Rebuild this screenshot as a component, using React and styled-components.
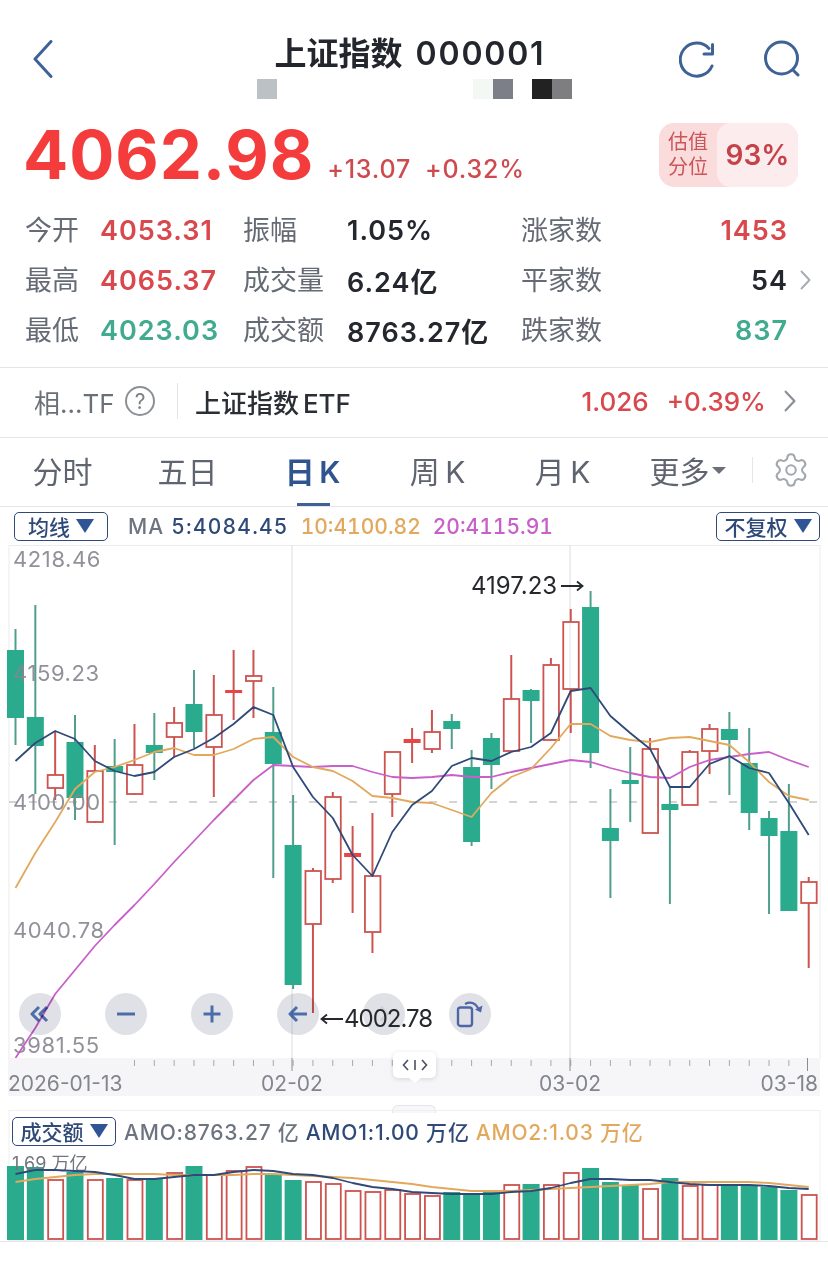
import React from 'react';
import styled, {createGlobalStyle} from 'styled-components';
import {Settings} from 'lucide-react';

const NAVY = '#2f4a78';
const BLUE = '#3f6296';
const RED = '#d9484d';
const GREEN = '#41ab90';
const BODY_GREEN = '#2bab8e';
const WICK_GREEN = '#4f9f8c';
const WICK_RED = '#cc5350';
const ORANGE = '#e2a95e';
const PINK = '#c95fc9';
const FONT = 'Inter, "Noto Sans CJK SC", sans-serif';

const GlobalStyle = createGlobalStyle`
  html, body {
    margin: 0;
    padding: 0;
    background: #fff;
    font-family: ${FONT};
    overflow: hidden;
  }
`;

// [high, body top, body bottom, low, kind]  g = green, r = hollow red, d = solid red doji
const candles = [
  [629, 650, 718, 745, 'g'], [605, 717, 746, 794, 'g'], [731, 775, 788, 800, 'r'], [715, 742, 798, 820, 'g'],
  [745, 771, 822, 823, 'r'], [739, 766, 772, 845, 'g'], [724, 765, 794, 795, 'r'], [713, 745, 753, 780, 'g'],
  [707, 723, 737, 757, 'r'], [670, 704, 732, 748, 'g'], [675, 715, 747, 797, 'r'], [650, 690, 693, 720, 'd'],
  [650, 676, 681, 718, 'r'], [687, 732, 764, 878, 'g'], [795, 845, 985, 989, 'g'], [868, 871, 924, 1013, 'r'],
  [792, 797, 879, 883, 'r'], [826, 853, 857, 913, 'd'], [813, 876, 932, 953, 'r'], [752, 752, 794, 817, 'r'],
  [728, 739, 743, 763, 'd'], [710, 732, 749, 753, 'r'], [714, 721, 729, 749, 'g'], [750, 767, 842, 846, 'g'],
  [733, 738, 765, 789, 'g'], [655, 699, 751, 751, 'r'], [689, 690, 701, 743, 'g'], [658, 665, 740, 740, 'r'],
  [609, 622, 689, 733, 'r'], [591, 607, 753, 768, 'g'], [789, 828, 841, 898, 'g'], [747, 780, 784, 822, 'g'],
  [738, 749, 833, 833, 'r'], [787, 804, 810, 904, 'g'], [750, 752, 805, 805, 'r'], [724, 729, 751, 774, 'r'],
  [712, 729, 740, 795, 'g'], [728, 763, 813, 830, 'g'], [811, 818, 836, 914, 'g'], [784, 831, 911, 911, 'g'],
  [877, 882, 903, 968, 'r'],
];

const slotX = i => 15.5 + i * 19.83;

const ma5 = [761, 743, 731, 739, 761, 771, 776, 772, 757, 749, 738, 724, 707, 715, 767, 797, 818, 855, 876, 832, 805,
  791, 766, 758, 761, 752, 747, 733, 691, 688, 716, 733, 749, 787, 787, 764, 756, 768, 773, 803, 835];
const ma10 = [888, 853, 822, 789, 772, 767, 760, 752, 748, 755, 755, 749, 739, 737, 757, 767, 771, 781, 796, 798, 802,
  803, 810, 817, 793, 777, 769, 748, 724, 724, 736, 740, 742, 738, 737, 741, 745, 762, 782, 796, 800];
const ma20 = [1058, 1028, 994, 970, 946, 925, 905, 884, 862, 841, 820, 800, 780, 765, 766, 767, 766, 766, 772, 777, 778,
  777, 775, 777, 777, 772, 768, 764, 760, 762, 768, 773, 777, 778, 767, 760, 757, 754, 752, 760, 767];

// [bar top, kind]
const volumes = [
  [1166, 'g'], [1167, 'g'], [1180, 'r'], [1172, 'g'], [1180, 'r'], [1178, 'g'], [1180, 'r'], [1178, 'g'], [1173, 'r'],
  [1166, 'g'], [1175, 'r'], [1171, 'r'], [1167, 'r'], [1175, 'g'], [1180, 'g'], [1182, 'r'], [1184, 'r'], [1191, 'r'],
  [1192, 'r'], [1190, 'r'], [1194, 'r'], [1196, 'r'], [1192, 'g'], [1195, 'g'], [1190, 'g'], [1185, 'r'], [1184, 'g'],
  [1185, 'r'], [1173, 'r'], [1168, 'g'], [1182, 'g'], [1185, 'g'], [1189, 'r'], [1178, 'g'], [1186, 'r'], [1185, 'r'],
  [1185, 'g'], [1185, 'g'], [1187, 'g'], [1190, 'g'], [1195, 'r'],
];
const amo1 = [1174, 1170, 1170, 1171, 1172, 1175, 1179, 1179, 1177, 1175, 1175, 1172, 1170, 1171, 1174, 1175, 1178, 1183,
  1187, 1189, 1192, 1193, 1194, 1194, 1194, 1192, 1191, 1188, 1183, 1179, 1179, 1180, 1180, 1182, 1184, 1185, 1185, 1185,
  1186, 1188, 1189];
const amo2 = [1182, 1179, 1177, 1175, 1174, 1174, 1174, 1174, 1175, 1175, 1175, 1175, 1174, 1174, 1175, 1176, 1177, 1178,
  1180, 1182, 1184, 1187, 1189, 1191, 1191, 1191, 1190, 1189, 1188, 1187, 1186, 1185, 1184, 1182, 1182, 1182, 1182, 1182,
  1183, 1185, 1187];

const linePoints = ys => ys.map((y, i) => `${slotX(i).toFixed(1)},${y}`).join(' ');

const yLabels = [['4218.46', 567], ['4159.23', 681], ['4100.00', 810], ['4040.78', 938], ['3981.55', 1053]];
const ticks = Array.from({length: 34}, (_, i) => slotX(6 + i));

function Candle({data, index}) {
  const [hi, top, bot, lo, kind] = data;
  const x = slotX(index);
  const wick = kind === 'g' ? WICK_GREEN : WICK_RED;
  return (
    <g>
      <line x1={x} x2={x} y1={hi} y2={lo} stroke={wick} strokeWidth="2" />
      {kind === 'g' && <rect x={x - 8.5} y={top} width="17" height={bot - top} fill={BODY_GREEN} />}
      {kind === 'd' && <rect x={x - 8.5} y={top} width="17" height={bot - top} fill="#ea4545" />}
      {kind === 'r' && (
        <rect x={x - 7.5} y={top} width="15.5" height={bot - top} fill="#fff" stroke={WICK_RED} strokeWidth="1.8" />
      )}
    </g>
  );
}

function MarkArrow({left}) {
  return (
    <svg width="24" height="12" viewBox="0 0 24 12" fill="none" stroke="#26282d" strokeWidth="1.8">
      <path d={left ? 'M23 6H2M7 1.500 1.500 6 7 10.500' : 'M1 6h21M17 1.500 22.500 6 17 10.500'} />
    </svg>
  );
}

function Chevron({size, color}) {
  return (
    <svg width={size * 0.55} height={size} viewBox="0 0 11 20" fill="none">
      <path d="m1.500 1.500 8 8.500-8 8.500" stroke={color} strokeWidth="2" strokeLinecap="round" strokeLinejoin="round" />
    </svg>
  );
}

function App() {
  return (
    <Page>
      <GlobalStyle />
      <TopBar>
        <BackSlot>
          <svg width="22" height="38" viewBox="0 0 22 38" fill="none">
            <path d="M19 1.5 3 19l16 17.5" stroke={BLUE} strokeWidth="3" strokeLinecap="round" strokeLinejoin="round" />
          </svg>
        </BackSlot>
        <Title>
          上证指数<TitleCode>000001</TitleCode>
        </Title>
        <TopIcons>
          <svg width="38" height="38" viewBox="0 0 38 38" fill="none">
            <path d="M33 26A16.5 16.5 0 1 1 30 8.500" stroke={BLUE} strokeWidth="3" strokeLinecap="round" />
            <path d="M33.500 4.500V14H25" stroke={BLUE} strokeWidth="3" strokeLinecap="round" strokeLinejoin="round" />
          </svg>
          <svg width="38" height="38" viewBox="0 0 38 38" fill="none">
            <circle cx="19.500" cy="18" r="16" stroke={BLUE} strokeWidth="3" />
            <path d="m31 30 5 5" stroke={BLUE} strokeWidth="3" strokeLinecap="round" />
          </svg>
        </TopIcons>
      </TopBar>
      <Mosaic>
        <Pixel $left={257} $color="#bcc1c5" />
        <Pixel $left={473} $color="#f4f8f5" />
        <Pixel $left={493} $color="#7c7f88" />
        <Pixel $left={532} $color="#222" />
        <Pixel $left={552} $color="#7e7d80" />
      </Mosaic>

      <QuoteRow>
        <Price>4062.98</Price>
        <Change>+13.07</Change>
        <Change>+0.32%</Change>
        <Badge>
          <BadgeLabel>估值<br />分位</BadgeLabel>
          <BadgeValue>93%</BadgeValue>
        </Badge>
      </QuoteRow>

      <Stats>
        <StatLabel>今开</StatLabel>
        <StatValue $color={RED}>4053.31</StatValue>
        <StatLabel>振幅</StatLabel>
        <StatValue>1.05%</StatValue>
        <StatLabel>涨家数</StatLabel>
        <CountValue $color={RED}>1453</CountValue>
        <span />

        <StatLabel>最高</StatLabel>
        <StatValue $color={RED}>4065.37</StatValue>
        <StatLabel>成交量</StatLabel>
        <StatValue>6.24亿</StatValue>
        <StatLabel>平家数</StatLabel>
        <CountValue>54</CountValue>
        <RowChevron>
          <Chevron size={20} color="#a9adb3" />
        </RowChevron>

        <StatLabel>最低</StatLabel>
        <StatValue $color={GREEN}>4023.03</StatValue>
        <StatLabel>成交额</StatLabel>
        <StatValue>8763.27亿</StatValue>
        <StatLabel>跌家数</StatLabel>
        <CountValue $color={GREEN}>837</CountValue>
        <span />
      </Stats>

      <EtfRow>
        <EtfLabel>相...TF</EtfLabel>
        <HelpCircle>?</HelpCircle>
        <EtfDivider />
        <EtfName>上证指数 ETF</EtfName>
        <EtfPrice>1.026</EtfPrice>
        <EtfPrice>+0.39%</EtfPrice>
        <Chevron size={22} color="#8a8f96" />
      </EtfRow>

      <Tabs>
        <Tab>分时</Tab>
        <Tab>五日</Tab>
        <Tab $active>日 K</Tab>
        <Tab>周 K</Tab>
        <Tab>月 K</Tab>
        <Tab>
          更多<MoreCaret />
        </Tab>
        <TabDivider />
        <GearSlot>
          <Settings size={38} strokeWidth={1.3} color="#a3a7ae" />
        </GearSlot>
      </Tabs>

      <Legend>
        <Chip $width={94}>
          均线<ChipCaret />
        </Chip>
        <MaText>
          <MaPart $color="#6d7480" $spacing={1.2}>MA </MaPart>
          <MaPart $color={NAVY} $spacing={1.2}>5:4084.45</MaPart>
        </MaText>
        <MaPart $color={ORANGE} $spacing={0}>10:4100.82</MaPart>
        <MaPart $color={PINK} $spacing={0}>20:4115.91</MaPart>
        <Chip $width={104} $right>
          不复权<ChipCaret />
        </Chip>
      </Legend>

      <ChartPanel>
        <ChartSvg width="828" height="513" viewBox="0 545 828 513">
          <rect x="9" y="545.5" width="811" height="513" fill="none" stroke="#ececee" />
          <line x1="292" x2="292" y1="545" y2="1058" stroke="#dcdce0" />
          <line x1="570" x2="570" y1="545" y2="1058" stroke="#dcdce0" />
          <line x1="9" x2="820" y1="802" y2="802" stroke="#c6c6c8" strokeWidth="1.5" strokeDasharray="8 12" />
          {candles.map((c, i) => (
            <Candle key={i} data={c} index={i} />
          ))}
          <line x1="570" x2="570" y1="623" y2="688" stroke="#e4e4e8" />
          {yLabels.map(([text, y]) => (
            <AxisLabel key={text} x="13" y={y}>
              {text}
            </AxisLabel>
          ))}
          <polyline points={linePoints(ma20)} fill="none" stroke={PINK} strokeWidth="1.8" strokeLinejoin="round" />
          <polyline points={linePoints(ma10)} fill="none" stroke={ORANGE} strokeWidth="1.8" strokeLinejoin="round" />
          <polyline points={linePoints(ma5)} fill="none" stroke={NAVY} strokeWidth="1.8" strokeLinejoin="round" />
        </ChartSvg>

        <HighMark>
          4197.23
          <MarkArrow />
        </HighMark>
        <Toolbar>
          <RoundButton>
            <svg width="22" height="18" viewBox="0 0 22 18" fill="none" stroke="#4c6ea8" strokeWidth="3" strokeLinejoin="round">
              <path d="M10 2 3 9l7 7M18 2l-7 7 7 7" />
            </svg>
          </RoundButton>
          <RoundButton>
            <svg width="18" height="4" viewBox="0 0 18 4">
              <rect width="18" height="3" y="0.5" fill="#4c6ea8" />
            </svg>
          </RoundButton>
          <RoundButton>
            <svg width="20" height="20" viewBox="0 0 20 20" fill="none" stroke="#4c6ea8" strokeWidth="3">
              <path d="M10 1.5v17M1.5 10h17" />
            </svg>
          </RoundButton>
          <RoundButton>
            <svg width="20" height="18" viewBox="0 0 20 18" fill="none" stroke="#4c6ea8" strokeWidth="3" strokeLinejoin="round">
              <path d="M9 2 2 9l7 7M2 9h17" />
            </svg>
          </RoundButton>
          <RoundButton>
            <svg width="10" height="18" viewBox="0 0 10 18" fill="none" stroke="#cfd1d8" strokeWidth="3">
              <path d="m2 2 6 7-6 7" />
            </svg>
          </RoundButton>
          <RoundButton>
            <svg width="28" height="28" viewBox="0 0 28 28" fill="none" stroke="#4f66a6" strokeLinejoin="round">
              <rect x="2" y="7.5" width="14" height="18.5" rx="2.5" strokeWidth="2.4" />
              <path d="M9 4c6-3 11-1 14 6" strokeWidth="2.2" />
              <path d="M19 9.5l6 3 1.5-7z" fill="#4f66a6" stroke="none" />
            </svg>
          </RoundButton>
        </Toolbar>
        <LowMark>
          <MarkArrow left />
          4002.78
        </LowMark>
      </ChartPanel>

      <AxisStrip>
        <svg width="828" height="38" viewBox="0 1058 828 38">
          {ticks.map(x => (
            <line key={x} x1={x} x2={x} y1="1060" y2="1066" stroke="#a8a8ac" />
          ))}
          <line x1="292" x2="292" y1="1058" y2="1071" stroke="#8c8c90" />
          <line x1="570" x2="570" y1="1058" y2="1071" stroke="#8c8c90" />
          <line x1="807.5" x2="807.5" y1="1058" y2="1071" stroke="#8c8c90" />
          <DateLabel x="8" y="1091">2026-01-13</DateLabel>
          <DateLabel x="292" y="1091" textAnchor="middle">02-02</DateLabel>
          <DateLabel x="570" y="1091" textAnchor="middle">03-02</DateLabel>
          <DateLabel x="818" y="1091" textAnchor="end">03-18</DateLabel>
        </svg>
        <SliderHandle>
          <svg width="26" height="12" viewBox="0 0 26 12" fill="none" stroke="#4a5060" strokeWidth="1.6">
            <path d="M6 1 1.500 6 6 11M13 1v10M20 1l4.500 5L20 11" />
          </svg>
        </SliderHandle>
      </AxisStrip>

      <VolumePanel>
        <GripTab />
        <VolumeSvg width="828" height="131" viewBox="0 1110 828 131">
          <rect x="9" y="1110.5" width="811" height="130" fill="none" stroke="#efeff2" />
          {volumes.map(([top, kind], i) =>
            kind === 'g' ? (
              <rect key={i} x={slotX(i) - 8.5} y={top} width="17" height={1240 - top} fill={BODY_GREEN} />
            ) : (
              <rect key={i} x={slotX(i) - 7} y={top} width="15" height={1239 - top} fill="#fff" stroke={WICK_RED} strokeWidth="1.8" />
            )
          )}
          <VolumeScale x="12" y="1170">1.69 万亿</VolumeScale>
          <polyline points={linePoints(amo2)} fill="none" stroke={ORANGE} strokeWidth="1.8" strokeLinejoin="round" />
          <polyline points={linePoints(amo1)} fill="none" stroke={NAVY} strokeWidth="1.8" strokeLinejoin="round" />
        </VolumeSvg>
        <VolumeLegend>
          <Chip $width={104}>
            成交额<ChipCaret />
          </Chip>
          <AmoPart $color="#6d7480">AMO:8763.27 亿</AmoPart>
          <AmoPart $color={NAVY}>AMO1:1.00 万亿</AmoPart>
          <AmoPart $color={ORANGE}>AMO2:1.03 万亿</AmoPart>
        </VolumeLegend>
      </VolumePanel>
      <BottomRule />
    </Page>
  );
}

const Page = styled.div`
  width: 828px;
  height: 1262px;
  overflow: hidden;
  background: #fff;
  color: #24272e;
`;

const TopBar = styled.header`
  height: 78px;
  padding: 0 28px 0 32px;
  display: grid;
  grid-template-columns: 1fr auto 1fr;
  align-items: end;
`;

const BackSlot = styled.div`
  display: flex;
  height: 38px;
`;

const Title = styled.h1`
  margin: 0 0 0 -12px;
  font-size: 32px;
  line-height: 44px;
  font-weight: 600;
  color: #23262d;
  align-self: start;
  padding-top: 32px;
`;

const TitleCode = styled.span`
  margin-left: 13px;
  letter-spacing: 1.8px;
`;

const TopIcons = styled.div`
  display: flex;
  gap: 45px;
  justify-content: flex-end;
`;

const Mosaic = styled.div`
  height: 20px;
  margin-top: 1px;
  position: relative;
`;

const Pixel = styled.i`
  position: absolute;
  top: 0;
  left: ${p => p.$left}px;
  width: 20px;
  height: 20px;
  background: ${p => p.$color};
`;

const QuoteRow = styled.section`
  height: 84px;
  margin-top: 20px;
  padding: 0 30px 0 23px;
  display: flex;
  align-items: flex-end;
  gap: 14px;
`;

const Price = styled.div`
  font-size: 67px;
  line-height: 70px;
  font-weight: 700;
  color: #f43c3c;
  margin-bottom: 13px;
  margin-right: -1px;
  letter-spacing: 0.9px;
`;

const Change = styled.div`
  font-size: 25px;
  line-height: 30px;
  font-weight: 500;
  color: #cf4a4e;
  margin-bottom: 19px;
  letter-spacing: 0.8px;
`;

const Badge = styled.div`
  margin-left: auto;
  margin-bottom: 16px;
  width: 139px;
  height: 64px;
  border-radius: 15px;
  background: #fbdcdd;
  display: flex;
  overflow: hidden;
`;

const BadgeLabel = styled.div`
  width: 58px;
  font-size: 20px;
  line-height: 25px;
  color: #c9565a;
  text-align: center;
  padding-top: 7px;
  box-sizing: border-box;
`;

const BadgeValue = styled.div`
  flex: 1;
  background: #fdeced;
  border-radius: 14px 0 0 14px;
  font-size: 28px;
  line-height: 64px;
  font-weight: 600;
  color: #c4434a;
  text-align: center;
`;

const Stats = styled.section`
  display: grid;
  grid-template-columns: 75px 143px 104px 174px 90px 1fr 40px;
  grid-auto-rows: 50px;
  align-items: center;
  padding-left: 25px;
  margin-top: 2px;
`;

const StatLabel = styled.span`
  font-size: 27px;
  line-height: 36px;
  margin-top: 2px;
  color: #656b75;
  white-space: nowrap;
`;

const StatValue = styled.span`
  font-size: 27px;
  font-weight: 600;
  letter-spacing: 1px;
  color: ${p => p.$color || '#24272e'};
  white-space: nowrap;
`;

const CountValue = styled(StatValue)`
  justify-self: end;
`;

const RowChevron = styled.span`
  display: flex;
  padding-left: 12px;
`;

const EtfRow = styled.section`
  height: 66px;
  margin-top: 12px;
  border-top: 1px solid #e6e6e8;
  border-bottom: 1px solid #e6e6e8;
  padding: 0 32px 3px 34px;
  display: flex;
  align-items: center;
`;

const EtfLabel = styled.span`
  font-size: 26px;
  color: #6a7079;
  width: 91px;
`;

const HelpCircle = styled.span`
  width: 30px;
  height: 30px;
  border: 2px solid #8b9097;
  border-radius: 50%;
  display: flex;
  align-items: center;
  justify-content: center;
  font-size: 21px;
  color: #7a7f86;
  box-sizing: border-box;
`;

const EtfDivider = styled.span`
  width: 1px;
  height: 36px;
  background: #e3e3e6;
  margin: 0 17px 0 22px;
`;

const EtfName = styled.span`
  font-size: 26px;
  font-weight: 500;
  color: #2b2e35;
  flex: 1;
  word-spacing: -3px;
`;

const EtfPrice = styled.span`
  font-size: 26px;
  font-weight: 500;
  color: ${RED};
  margin-right: 18px;
`;

const Tabs = styled.nav`
  height: 68px;
  border-bottom: 1px solid #e6e6e8;
  display: flex;
  align-items: center;
`;

const Tab = styled.div`
  width: 125px;
  align-self: stretch;
  padding-bottom: 4px;
  box-sizing: border-box;
  display: flex;
  align-items: center;
  justify-content: center;
  font-size: 30px;
  font-weight: ${p => (p.$active ? 600 : 400)};
  color: ${p => (p.$active ? '#2f5590' : '#5f6570')};
  position: relative;
  white-space: pre;
  word-spacing: -3px;

  &::after {
    content: '';
    display: ${p => (p.$active ? 'block' : 'none')};
    position: absolute;
    bottom: 0;
    left: 47px;
    width: 33px;
    height: 3px;
    background: ${BLUE};
  }
`;

const MoreCaret = styled.i`
  width: 0;
  height: 0;
  margin-left: 2px;
  border-left: 7px solid transparent;
  border-right: 7px solid transparent;
  border-top: 7px solid #6a7079;
`;

const TabDivider = styled.span`
  width: 1px;
  height: 26px;
  background: #e6e6e8;
  margin: 0 0 4px 2px;
`;

const GearSlot = styled.span`
  display: flex;
  margin: 0 0 4px 19px;
`;

const Legend = styled.section`
  height: 38px;
  padding: 0 8px 0 14px;
  display: flex;
  align-items: center;
  gap: 12px;
  box-sizing: border-box;
`;

const Chip = styled.div`
  width: ${p => p.$width}px;
  height: 29px;
  box-sizing: border-box;
  flex: none;
  border: 1px solid ${NAVY};
  border-radius: 5px;
  display: flex;
  align-items: center;
  justify-content: center;
  gap: 6px;
  font-size: 21px;
  font-weight: 500;
  color: ${NAVY};
  margin-left: ${p => (p.$right ? 'auto' : 0)};
`;

const ChipCaret = styled.i`
  width: 0;
  height: 0;
  border-left: 9px solid transparent;
  border-right: 9px solid transparent;
  border-top: 14px solid #2f5597;
`;

const MaText = styled.div`
  margin-left: 8px;
  white-space: pre;
`;

const MaPart = styled.span`
  font-size: 21px;
  font-weight: 500;
  font-variant-numeric: tabular-nums;
  letter-spacing: ${p => p.$spacing}px;
  color: ${p => p.$color};
  white-space: pre;
`;

const AmoPart = styled.span`
  font-size: 21px;
  font-weight: 500;
  letter-spacing: 0.8px;
  color: ${p => p.$color};
  white-space: pre;
`;

const ChartPanel = styled.section`
  height: 513px;
  position: relative;
`;

const ChartSvg = styled.svg`
  display: block;
`;

const AxisLabel = styled.text`
  font-family: ${FONT};
  font-size: 22px;
  letter-spacing: 0.6px;
  fill: #85868e;
  fill-opacity: 0.9;
`;

const HighMark = styled.div`
  position: absolute;
  left: 471px;
  top: 27px;
  display: flex;
  align-items: center;
  gap: 3px;
  font-size: 24px;
  line-height: 28px;
  color: #26282d;
  white-space: pre;
`;

const LowMark = styled(HighMark)`
  left: 320px;
  top: 460px;
  gap: 0;
  letter-spacing: -1px;
`;

const Toolbar = styled.div`
  position: absolute;
  left: 19px;
  top: 448px;
  display: flex;
  gap: 44px;
`;

const RoundButton = styled.div`
  width: 42px;
  height: 42px;
  border-radius: 50%;
  background: #e0e0e7;
  mix-blend-mode: multiply;
  display: flex;
  align-items: center;
  justify-content: center;
`;

const AxisStrip = styled.section`
  height: 38px;
  position: relative;
  background: linear-gradient(90deg, #fff 0, #fff 8px, #f5f5f8 8px, #f6f6f9 820px, #fff 820px);

  svg {
    display: block;
  }
`;

const DateLabel = styled.text`
  font-family: ${FONT};
  font-size: 21px;
  fill: #82858c;
`;

const SliderHandle = styled.div`
  position: absolute;
  left: 393px;
  top: -6px;
  width: 43px;
  height: 26px;
  background: #fff;
  border-radius: 5px;
  box-shadow: 0 1px 4px rgba(90, 90, 110, 0.22);
  display: flex;
  align-items: center;
  justify-content: center;

  &::after {
    content: '';
    position: absolute;
    left: 16px;
    bottom: -5px;
    border-left: 6px solid transparent;
    border-right: 6px solid transparent;
    border-top: 5px solid #fff;
  }
`;

const VolumePanel = styled.section`
  height: 131px;
  margin-top: 14px;
  position: relative;
`;

const GripTab = styled.div`
  position: absolute;
  left: 392px;
  top: -5px;
  width: 44px;
  height: 8px;
  box-sizing: border-box;
  background: #f7f7fa;
  border: 1px solid #e4e4ea;
  border-bottom: 0;
  border-radius: 6px 6px 0 0;
`;

const VolumeSvg = styled.svg`
  position: absolute;
  left: 0;
  top: 0;
`;

const VolumeScale = styled.text`
  font-family: ${FONT};
  font-size: 18px;
  fill: #73767e;
`;

const VolumeLegend = styled.div`
  position: relative;
  padding: 6px 0 0 12px;
  display: flex;
  align-items: center;
  gap: 6px;

  & > :first-child {
    margin-right: 2px;
  }
`;

const BottomRule = styled.div`
  height: 1px;
  background: #e4e6e8;
`;

export default App;
